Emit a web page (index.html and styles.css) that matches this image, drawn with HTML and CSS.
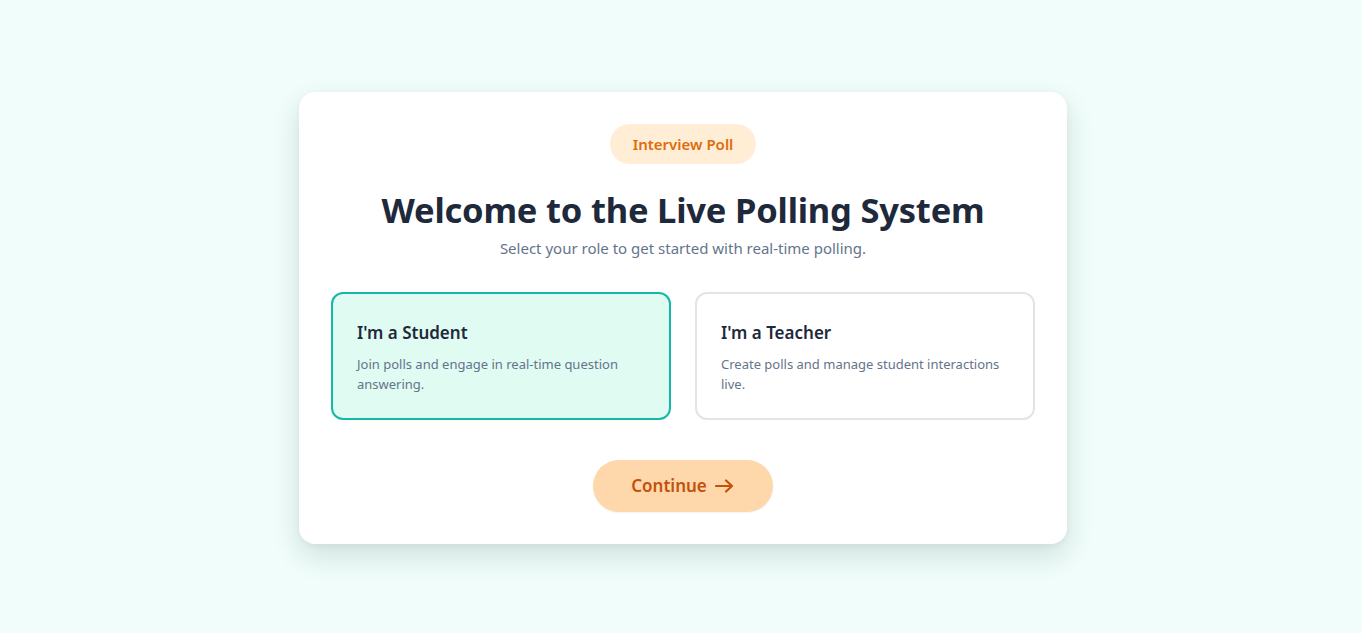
FILE: index.html
```html
<!DOCTYPE html>
<html lang="en">
<head>
<meta charset="utf-8">
<title>Live Polling System</title>
<link rel="stylesheet" href="styles.css">
</head>
<body>
<main class="page">
  <section class="panel">
    <span class="badge">Interview Poll</span>
    <h1 class="title">Welcome to the Live Polling System</h1>
    <p class="subtitle">Select your role to get started with real-time polling.</p>
    <div class="roles">
      <div class="role role-active">
        <h2 class="role-title">I'm a Student</h2>
        <p class="role-desc">Join polls and engage in real-time question answering.</p>
      </div>
      <div class="role">
        <h2 class="role-title">I'm a Teacher</h2>
        <p class="role-desc">Create polls and manage student interactions live.</p>
      </div>
    </div>
    <button class="continue" type="button">Continue
      <svg class="arrow" width="20" height="14" viewBox="0 0 20 14" aria-hidden="true"><path d="M1 7h16M11 1.5L17 7l-6 5.5" fill="none" stroke="currentColor" stroke-width="2.2" stroke-linecap="round" stroke-linejoin="round"/></svg>
    </button>
  </section>
</main>
</body>
</html>
```
FILE: styles.css
```css
* { box-sizing: border-box; }
html, body { margin: 0; padding: 0; }
body {
  background: #f0fdfa;
  font-family: "Noto Sans", "Open Sans", sans-serif;
  color: #1e293b;
}
.page {
  min-height: 633px;
  padding-left: 4px;
  display: flex;
  align-items: center;
  justify-content: center;
}
.panel {
  width: 768px;
  background: #fff;
  border-radius: 16px;
  box-shadow: 0 12px 28px rgba(15, 60, 55, 0.14), 0 2px 6px rgba(15, 60, 55, 0.05);
  padding: 32px;
  display: flex;
  flex-direction: column;
  align-items: center;
  margin-top: 2px;
}
.badge {
  display: inline-flex;
  align-items: center;
  height: 40px;
  padding: 0 23px;
  border-radius: 999px;
  background: #ffedd5;
  color: #dd6d0b;
  font-size: 15px;
  font-weight: 600;
}
.title {
  margin: 22px 0 0;
  font-size: 34.5px;
  line-height: 48px;
  font-weight: 700;
  color: #1e293b;
  letter-spacing: -0.2px;
}
.subtitle {
  margin: 2px 0 0;
  font-size: 15px;
  line-height: 24px;
  color: #64748b;
}
.roles {
  width: 100%;
  margin-top: 32px;
  display: grid;
  grid-template-columns: 1fr 1fr;
  gap: 24px;
}
.role {
  height: 128px;
  border: 2px solid #e2e4e8;
  border-radius: 12px;
  padding: 26px 24px 20px;
  background: #fff;
}
.role-active {
  border-color: #14b8a6;
  background: #e0fbf2;
}
.role-title {
  margin: 0;
  font-size: 17px;
  line-height: 26px;
  font-weight: 600;
  color: #1e293b;
}
.role-desc {
  margin: 8px 0 0;
  font-size: 13px;
  line-height: 20px;
  color: #64748b;
}
.continue {
  margin-top: 40px;
  width: 180px;
  height: 52px;
  border: none;
  border-radius: 999px;
  background: #fed7aa;
  color: #c2510c;
  font-family: inherit;
  font-size: 17px;
  font-weight: 600;
  display: inline-flex;
  align-items: center;
  justify-content: center;
  gap: 8px;
  cursor: pointer;
  box-shadow: 0 1px 2px rgba(0,0,0,0.05);
}
.arrow { display: block; }
```
